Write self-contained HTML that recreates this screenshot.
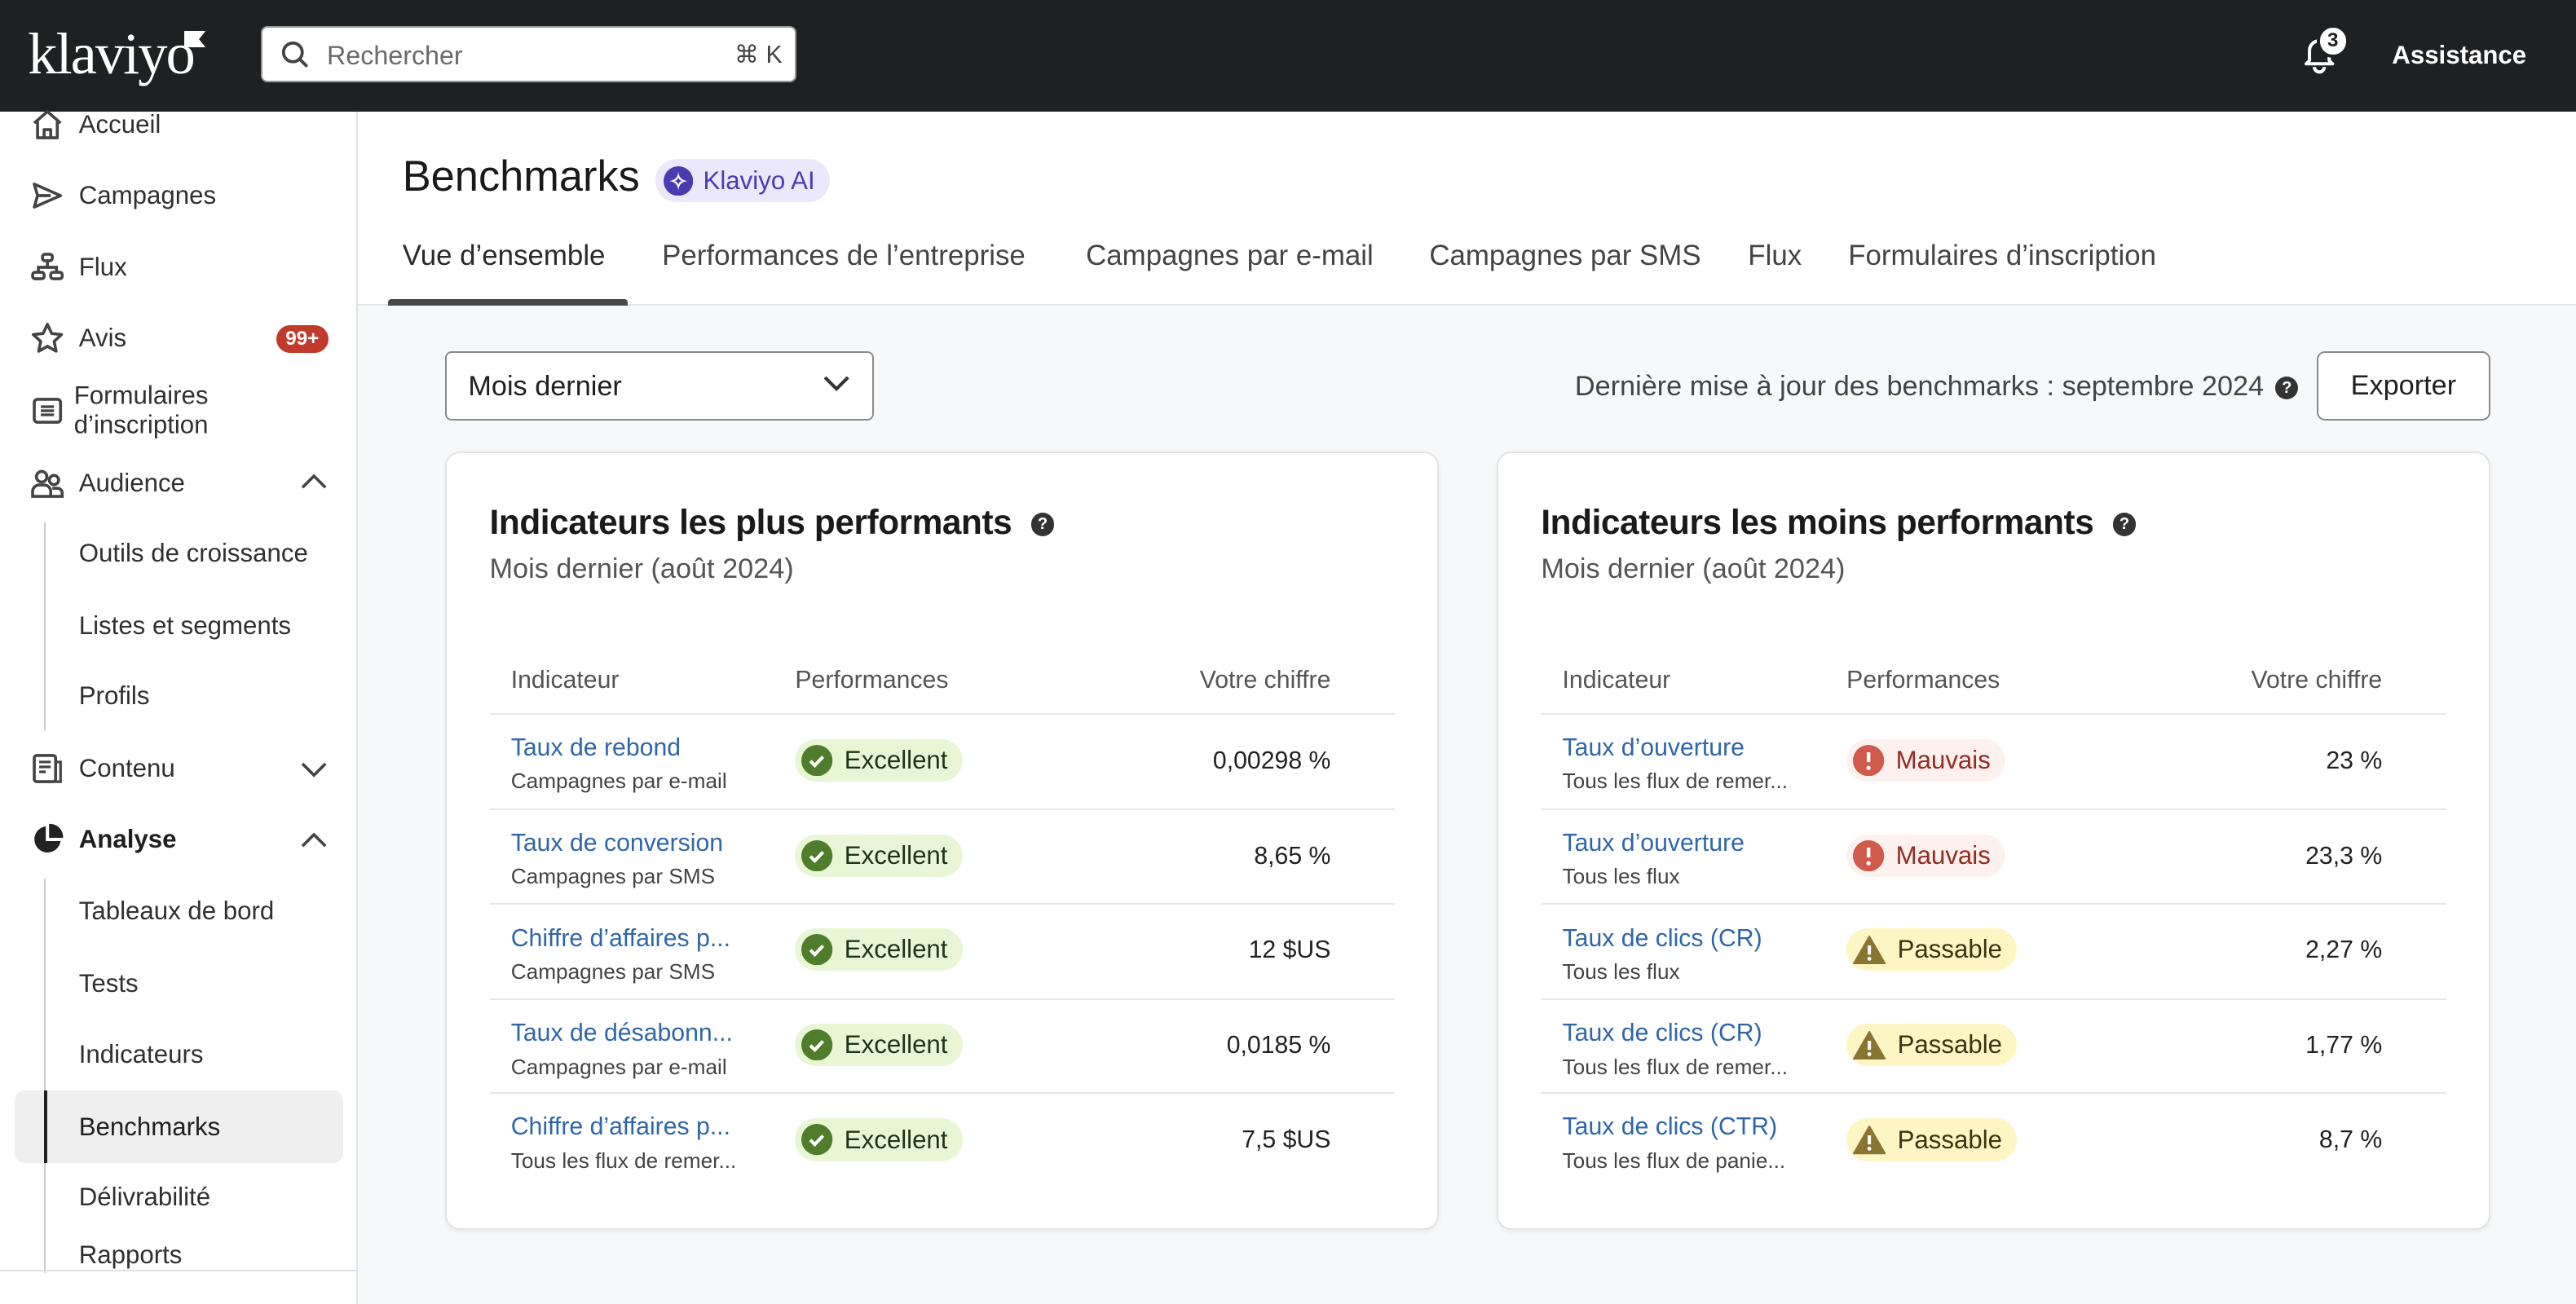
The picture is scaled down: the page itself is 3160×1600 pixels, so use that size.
<!DOCTYPE html>
<html><head><meta charset="utf-8">
<style>
*{box-sizing:border-box;margin:0;padding:0}
html,body{width:3160px;height:1600px;overflow:hidden;background:#f7f8f9}
#r{position:absolute;left:0;top:0;width:1568px;height:794px;zoom:2.01531;font-family:"Liberation Sans",sans-serif;color:#303030;background:#f7f8f9;overflow:hidden}
.a{position:absolute;white-space:nowrap}
.top{left:0;top:0;width:1568px;height:68px;background:#1f2022}
.side{left:0;top:68px;width:218px;height:726px;background:#fff;border-right:1px solid #e4e4e4}
.ni{position:absolute;left:48px;font-size:15.5px;color:#303030;transform:translateY(-50%)}
.ic{position:absolute;left:18px;width:22px;height:22px;transform:translateY(-50%)}
.hd{left:218px;top:68px;width:1350px;height:118px;background:#fff;border-bottom:1px solid #e6e6e6}
.tab{position:absolute;top:146px;font-size:17.3px;color:#444}
.card{position:absolute;top:275px;width:605px;height:474px;background:#fff;border:1px solid #e3e3e3;border-radius:9px;box-shadow:0 1px 3px rgba(0,0,0,.06)}
.ct{position:absolute;left:26px;top:30px;font-size:21px;font-weight:bold;color:#1a1a1a;letter-spacing:-0.2px}
.cs{position:absolute;left:26px;top:61px;font-size:17px;color:#555}
.th{position:absolute;top:130px;font-size:15px;color:#555}
.hl{position:absolute;left:26px;width:551px;height:1px;background:#e6e6e6}
.lk{position:absolute;left:39px;font-size:15px;color:#2f67a8}
.sb{position:absolute;left:39px;font-size:13px;color:#444}
.val{position:absolute;right:65px;font-size:15px;color:#222}
.bd{position:absolute;left:212px;height:26px;border-radius:13px;padding:0 9px 0 4px;font-size:15.5px;display:flex;align-items:center;gap:7px}
.g{background:#e9f6d5;color:#1f3317}
.m{background:#fdf1ef;color:#962b22}
.p{background:#fdf5c4;color:#3a3414}
.q{display:inline-block;width:14px;height:14px;border-radius:7px;background:#333;color:#fff;font-size:10px;font-weight:bold;text-align:center;line-height:14px;vertical-align:middle}
</style></head><body><div id="r">
<div class="a top"></div>
<div class="a" style="left:17px;top:12px;font-family:'Liberation Serif',serif;font-size:36px;color:#fff;letter-spacing:-1px">klaviyo</div>
<svg class="a" style="left:112px;top:19px" width="13" height="10"><path d="M0 0H13L9 5L13 10H0Z" fill="#fff"/></svg>
<div class="a" style="left:159px;top:16px;width:326px;height:34px;background:#fff;border:1px solid #999;border-radius:4px"></div>
<svg class="a" style="left:170px;top:24px" width="19" height="19" viewBox="0 0 20 20"><circle cx="8.5" cy="8.5" r="6" fill="none" stroke="#444" stroke-width="2"/><path d="M13 13L17 17" stroke="#444" stroke-width="2" stroke-linecap="round"/></svg>
<div class="a" style="left:199px;top:25px;font-size:16px;color:#6a6a6a">Rechercher</div>
<div class="a" style="left:447px;top:25px;font-size:15px;color:#444">⌘ K</div>
<svg class="a" style="left:1401px;top:21px" width="22" height="24" viewBox="0 0 22 24"><path d="M5 16V10a6 6 0 0 1 12 0v6l2 2H3z" fill="none" stroke="#fff" stroke-width="2" stroke-linejoin="round"/><path d="M8 20a3 3 0 0 0 6 0" fill="none" stroke="#fff" stroke-width="2"/></svg>
<div class="a" style="left:1410px;top:15px;width:20px;height:20px;border-radius:10px;background:#fff;border:2px solid #1f2022;color:#1f2022;font-size:12px;font-weight:bold;text-align:center;line-height:16px">3</div>
<div class="a" style="left:1456px;top:25px;font-size:15.5px;font-weight:bold;color:#fff">Assistance</div>

<div class="a side"></div>
<svg class="ic" style="top:76px" viewBox="0 0 22 22"><path d="M3 10L11 3l8 7M5 9v10h12V9M9 19v-5h4v5" fill="none" stroke="#444" stroke-width="1.8" stroke-linejoin="round"/></svg>
<div class="ni" style="top:76px">Accueil</div>
<svg class="ic" style="top:119px" viewBox="0 0 22 22"><path d="M3 4l16 7-16 7 2-7zM5 11h8" fill="none" stroke="#444" stroke-width="1.8" stroke-linejoin="round"/></svg>
<div class="ni" style="top:119px">Campagnes</div>
<svg class="ic" style="top:163px" viewBox="0 0 22 22"><rect x="8" y="3" width="6" height="4" rx="1.5" fill="none" stroke="#444" stroke-width="1.8"/><rect x="2" y="14" width="7" height="4" rx="1.5" fill="none" stroke="#444" stroke-width="1.8"/><rect x="13" y="14" width="7" height="4" rx="1.5" fill="none" stroke="#444" stroke-width="1.8"/><path d="M11 7v4M5.5 14v-3h11v3" fill="none" stroke="#444" stroke-width="1.8"/></svg>
<div class="ni" style="top:163px">Flux</div>
<svg class="ic" style="top:206px" viewBox="0 0 22 22"><path d="M11 2.5l2.6 5.6 6 .7-4.5 4.1 1.2 6-5.3-3-5.3 3 1.2-6L2.4 8.8l6-.7z" fill="none" stroke="#444" stroke-width="1.8" stroke-linejoin="round"/></svg>
<div class="ni" style="top:206px">Avis</div>
<div class="a" style="left:168px;top:198px;width:32px;height:17px;border-radius:9px;background:#c13b2c;color:#fff;font-size:12px;font-weight:bold;text-align:center;line-height:17px">99+</div>
<svg class="ic" style="top:250px" viewBox="0 0 22 22"><rect x="3" y="4" width="16" height="14" rx="2" fill="none" stroke="#444" stroke-width="1.8"/><path d="M7 8.5h8M7 11h8M7 13.5h8" stroke="#444" stroke-width="1.6"/></svg>
<div class="ni" style="top:250px;left:45px;line-height:18px">Formulaires<br>d’inscription</div>
<svg class="ic" style="top:294px" viewBox="0 0 22 22"><circle cx="7.5" cy="7" r="3.2" fill="none" stroke="#444" stroke-width="1.8"/><circle cx="15" cy="9" r="2.8" fill="none" stroke="#444" stroke-width="1.8"/><path d="M2 19v-3a4 4 0 0 1 4-4h3a4 4 0 0 1 4 4v3zM13 19h7v-2a3 3 0 0 0-3-3h-3" fill="none" stroke="#444" stroke-width="1.8"/></svg>
<div class="ni" style="top:294px">Audience</div>
<svg class="a" style="left:182px;top:287px" width="18" height="12"><path d="M2 10l7-7 7 7" fill="none" stroke="#444" stroke-width="1.8"/></svg>
<div class="a" style="left:27px;top:318px;width:1px;height:127px;background:#ccc"></div>
<div class="ni" style="top:337px">Outils de croissance</div>
<div class="ni" style="top:381px">Listes et segments</div>
<div class="ni" style="top:424px">Profils</div>
<svg class="ic" style="top:468px" viewBox="0 0 22 22"><rect x="3" y="3" width="13" height="16" rx="1.5" fill="none" stroke="#444" stroke-width="1.8"/><path d="M16 7h3v12H7M6 7h7M6 10h7M6 13h4" fill="none" stroke="#444" stroke-width="1.6"/></svg>
<div class="ni" style="top:468px">Contenu</div>
<svg class="a" style="left:182px;top:462px" width="18" height="12"><path d="M2 3l7 7 7-7" fill="none" stroke="#444" stroke-width="1.8"/></svg>
<svg class="ic" style="top:511px" viewBox="0 0 22 22"><path d="M10 3a8 8 0 1 0 9 9h-9z" fill="#222"/><path d="M12 1.5a8 8 0 0 1 8.5 8.5H12z" fill="#222"/></svg>
<div class="ni" style="top:511px;font-weight:bold;color:#1f1f1f">Analyse</div>
<svg class="a" style="left:182px;top:505px" width="18" height="12"><path d="M2 10l7-7 7 7" fill="none" stroke="#444" stroke-width="1.8"/></svg>
<div class="a" style="left:27px;top:535px;width:1px;height:240px;background:#ccc"></div>
<div class="ni" style="top:555px">Tableaux de bord</div>
<div class="ni" style="top:599px">Tests</div>
<div class="ni" style="top:642px">Indicateurs</div>
<div class="a" style="left:9px;top:664px;width:200px;height:44px;background:#efefef;border-radius:6px"></div>
<div class="a" style="left:27px;top:664px;width:2px;height:44px;background:#222"></div>
<div class="ni" style="top:686px;color:#1f1f1f">Benchmarks</div>
<div class="ni" style="top:729px">Délivrabilité</div>
<div class="ni" style="top:764px">Rapports</div>
<div class="a" style="left:0;top:773px;width:218px;height:1px;background:#e0e0e0"></div>

<div class="a hd"></div>
<div class="a" style="left:245px;top:93px;font-size:26px;color:#1a1a1a">Benchmarks</div>
<div class="a" style="left:399px;top:97px;width:106px;height:26px;border-radius:13px;background:#ece8fb"></div>
<svg class="a" style="left:404px;top:101px" width="18" height="18" viewBox="0 0 18 18"><circle cx="9" cy="9" r="9" fill="#4b3bb0"/><path d="M9 3.5C9.5 7 11 8.5 14.5 9 11 9.5 9.5 11 9 14.5 8.5 11 7 9.5 3.5 9 7 8.5 8.5 7 9 3.5z" fill="#fff"/><path d="M9 6.5C9.3 8 10 8.7 11.5 9 10 9.3 9.3 10 9 11.5 8.7 10 8 9.3 6.5 9 8 8.7 8.7 8 9 6.5z" fill="#4b3bb0"/></svg>
<div class="a" style="left:428px;top:101px;font-size:15.5px;color:#4b3bb0">Klaviyo AI</div>
<div class="tab" style="left:245px;color:#2a2a2a">Vue d’ensemble</div>
<div class="tab" style="left:403px">Performances de l’entreprise</div>
<div class="tab" style="left:661px">Campagnes par e-mail</div>
<div class="tab" style="left:870px">Campagnes par SMS</div>
<div class="tab" style="left:1064px">Flux</div>
<div class="tab" style="left:1125px">Formulaires d’inscription</div>
<div class="a" style="left:236px;top:182px;width:146px;height:4px;background:#4a4a4a;border-radius:2px 2px 0 0"></div>

<div class="a" style="left:271px;top:214px;width:261px;height:42px;background:#fff;border:1px solid #8a8a8a;border-radius:4px"></div>
<div class="a" style="left:285px;top:226px;font-size:17px;color:#1f1f1f">Mois dernier</div>
<svg class="a" style="left:500px;top:228px" width="18" height="12"><path d="M2 2l7 7 7-7" fill="none" stroke="#333" stroke-width="2"/></svg>
<div class="a" style="right:190px;top:226px;font-size:17px;color:#444">Dernière mise à jour des benchmarks : septembre 2024</div>
<span class="a q" style="left:1385px;top:229px">?</span>
<div class="a" style="left:1410px;top:214px;width:106px;height:42px;background:#fff;border:1px solid #8a8a8a;border-radius:5px;font-size:17px;color:#1f1f1f;text-align:center;line-height:40px">Exporter</div>

<div class="card" style="left:271px">
<div class="ct">Indicateurs les plus performants <span class="q" style="margin-left:6px">?</span></div>
<div class="cs">Mois dernier (août 2024)</div>
<div class="th" style="left:39px">Indicateur</div><div class="th" style="left:212px">Performances</div><div class="th" style="right:65px">Votre chiffre</div>
<div class="hl" style="top:158px"></div><div class="hl" style="top:216px"></div><div class="hl" style="top:274px"></div><div class="hl" style="top:332px"></div><div class="hl" style="top:389px"></div>
<div class="lk" style="top:171px">Taux de rebond</div><div class="sb" style="top:192px">Campagnes par e-mail</div>
<div class="lk" style="top:229px">Taux de conversion</div><div class="sb" style="top:250px">Campagnes par SMS</div>
<div class="lk" style="top:287px">Chiffre d’affaires p...</div><div class="sb" style="top:308px">Campagnes par SMS</div>
<div class="lk" style="top:345px">Taux de désabonn...</div><div class="sb" style="top:366px">Campagnes par e-mail</div>
<div class="lk" style="top:402px">Chiffre d’affaires p...</div><div class="sb" style="top:423px">Tous les flux de remer...</div>
<div class="val" style="top:179px">0,00298 %</div><div class="val" style="top:237px">8,65 %</div><div class="val" style="top:294px">12 $US</div><div class="val" style="top:352px">0,0185 %</div><div class="val" style="top:410px">7,5 $US</div>
<div class="bd g" style="top:174px"><svg width="19" height="19" viewBox="0 0 19 19"><circle cx="9.5" cy="9.5" r="9.5" fill="#4e7d2b"/><path d="M5.5 9.8l2.7 2.7 5-5.3" fill="none" stroke="#fff" stroke-width="2"/></svg>Excellent</div>
<div class="bd g" style="top:232px"><svg width="19" height="19" viewBox="0 0 19 19"><circle cx="9.5" cy="9.5" r="9.5" fill="#4e7d2b"/><path d="M5.5 9.8l2.7 2.7 5-5.3" fill="none" stroke="#fff" stroke-width="2"/></svg>Excellent</div>
<div class="bd g" style="top:289px"><svg width="19" height="19" viewBox="0 0 19 19"><circle cx="9.5" cy="9.5" r="9.5" fill="#4e7d2b"/><path d="M5.5 9.8l2.7 2.7 5-5.3" fill="none" stroke="#fff" stroke-width="2"/></svg>Excellent</div>
<div class="bd g" style="top:347px"><svg width="19" height="19" viewBox="0 0 19 19"><circle cx="9.5" cy="9.5" r="9.5" fill="#4e7d2b"/><path d="M5.5 9.8l2.7 2.7 5-5.3" fill="none" stroke="#fff" stroke-width="2"/></svg>Excellent</div>
<div class="bd g" style="top:405px"><svg width="19" height="19" viewBox="0 0 19 19"><circle cx="9.5" cy="9.5" r="9.5" fill="#4e7d2b"/><path d="M5.5 9.8l2.7 2.7 5-5.3" fill="none" stroke="#fff" stroke-width="2"/></svg>Excellent</div>
</div>

<div class="card" style="left:911px">
<div class="ct">Indicateurs les moins performants <span class="q" style="margin-left:6px">?</span></div>
<div class="cs">Mois dernier (août 2024)</div>
<div class="th" style="left:39px">Indicateur</div><div class="th" style="left:212px">Performances</div><div class="th" style="right:65px">Votre chiffre</div>
<div class="hl" style="top:158px"></div><div class="hl" style="top:216px"></div><div class="hl" style="top:274px"></div><div class="hl" style="top:332px"></div><div class="hl" style="top:389px"></div>
<div class="lk" style="top:171px">Taux d’ouverture</div><div class="sb" style="top:192px">Tous les flux de remer...</div>
<div class="lk" style="top:229px">Taux d’ouverture</div><div class="sb" style="top:250px">Tous les flux</div>
<div class="lk" style="top:287px">Taux de clics (CR)</div><div class="sb" style="top:308px">Tous les flux</div>
<div class="lk" style="top:345px">Taux de clics (CR)</div><div class="sb" style="top:366px">Tous les flux de remer...</div>
<div class="lk" style="top:402px">Taux de clics (CTR)</div><div class="sb" style="top:423px">Tous les flux de panie...</div>
<div class="val" style="top:179px">23 %</div><div class="val" style="top:237px">23,3 %</div><div class="val" style="top:294px">2,27 %</div><div class="val" style="top:352px">1,77 %</div><div class="val" style="top:410px">8,7 %</div>
<div class="bd m" style="top:174px"><svg width="19" height="19" viewBox="0 0 19 19"><circle cx="9.5" cy="9.5" r="9.5" fill="#d05a4b"/><path d="M9.5 4.5v6" stroke="#fff" stroke-width="2.2"/><circle cx="9.5" cy="14" r="1.3" fill="#fff"/></svg>Mauvais</div>
<div class="bd m" style="top:232px"><svg width="19" height="19" viewBox="0 0 19 19"><circle cx="9.5" cy="9.5" r="9.5" fill="#d05a4b"/><path d="M9.5 4.5v6" stroke="#fff" stroke-width="2.2"/><circle cx="9.5" cy="14" r="1.3" fill="#fff"/></svg>Mauvais</div>
<div class="bd p" style="top:289px"><svg width="20" height="18" viewBox="0 0 20 18"><path d="M10 1L19.5 17.5H.5z" fill="#8a7432" stroke="#8a7432" stroke-linejoin="round"/><path d="M10 6.5v5.5" stroke="#fff" stroke-width="2"/><circle cx="10" cy="14.6" r="1.2" fill="#fff"/></svg>Passable</div>
<div class="bd p" style="top:347px"><svg width="20" height="18" viewBox="0 0 20 18"><path d="M10 1L19.5 17.5H.5z" fill="#8a7432" stroke="#8a7432" stroke-linejoin="round"/><path d="M10 6.5v5.5" stroke="#fff" stroke-width="2"/><circle cx="10" cy="14.6" r="1.2" fill="#fff"/></svg>Passable</div>
<div class="bd p" style="top:405px"><svg width="20" height="18" viewBox="0 0 20 18"><path d="M10 1L19.5 17.5H.5z" fill="#8a7432" stroke="#8a7432" stroke-linejoin="round"/><path d="M10 6.5v5.5" stroke="#fff" stroke-width="2"/><circle cx="10" cy="14.6" r="1.2" fill="#fff"/></svg>Passable</div>
</div>
</div></body></html>
